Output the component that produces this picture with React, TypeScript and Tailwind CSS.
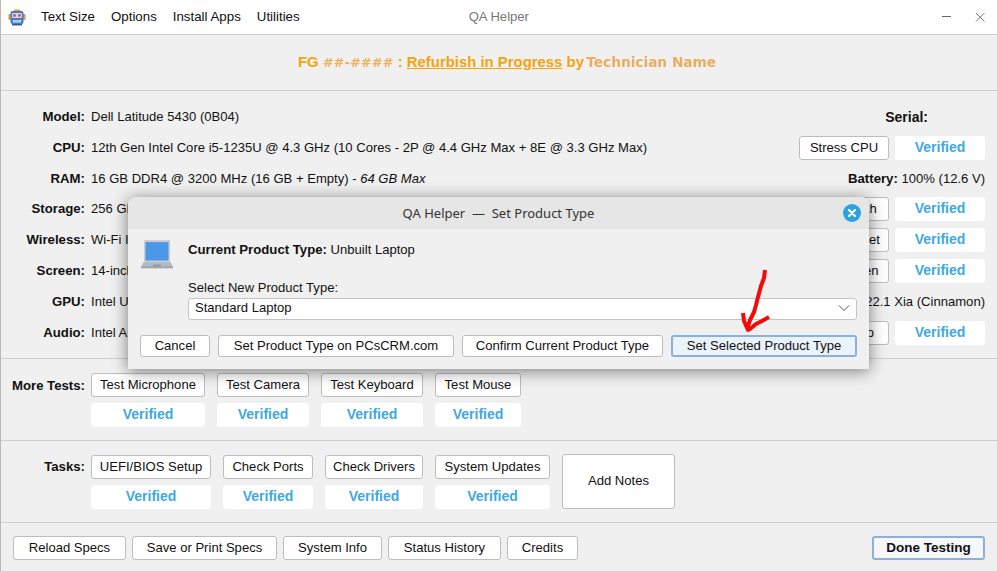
const Btn = ({ children, className = "" }: { children?: React.ReactNode; className?: string }) => (
  <div className={`flex items-center justify-center whitespace-nowrap rounded-[3px] border border-[#bdbdbd] bg-white text-[#111] ${className}`}>
    {children}
  </div>
);
const Verified = ({ className = "" }: { className?: string }) => (
  <div className={`flex h-6 items-center justify-center rounded-[3px] bg-white pb-[2px] text-[14px] font-bold text-[#40a8e4] ${className}`}>Verified</div>
);
const Row = ({ label, children, right, className = "" }: { label: string; children: React.ReactNode; right?: React.ReactNode; className?: string }) => (
  <div className={`flex h-6 items-center justify-between pr-3 ${className}`}>
    <div className="flex items-center overflow-hidden whitespace-nowrap">
      <div className="w-[84px] shrink-0 text-right text-[13.2px] font-bold">{label}</div>
      <div className="ml-[6px]">{children}</div>
    </div>
    <div className="flex shrink-0 items-center gap-[6px]">{right}</div>
  </div>
);
const TestPair = ({ name }: { name: string }) => (
  <>
    <Btn className="h-6 w-[90px] pb-[1px]">{name}</Btn>
    <Verified className="w-[90px]" />
  </>
);
const Column = ({ name, w }: { name: string; w: string }) => (
  <div className={`flex flex-col gap-[6px] ${w}`}>
    <Btn className="h-6 pb-[1px]">{name}</Btn>
    <Verified />
  </div>
);

const Robot = () => (
  <svg width="18" height="18" viewBox="0 0 18 18" className="shrink-0">
    <path d="M5 3.500 C5 0.500 13 0.500 13 3.500 Z" fill="#e8a33d" />
    <rect x="0.500" y="6" width="2.500" height="6" rx="1" fill="#e8913a" />
    <rect x="15" y="6" width="2.500" height="6" rx="1" fill="#e8913a" />
    <rect x="2.500" y="3" width="13" height="13" rx="2" fill="#3f7fc4" />
    <rect x="4" y="5" width="10" height="5" rx="1" fill="#cfd8e6" />
    <circle cx="6.500" cy="7.500" r="1.400" fill="#e8406a" />
    <circle cx="11.500" cy="7.500" r="1.400" fill="#e8406a" />
    <rect x="5" y="12" width="8" height="2.500" fill="#e4e9f2" />
    <path d="M7 12v2.500M9 12v2.500M11 12v2.500" stroke="#3f7fc4" strokeWidth="0.600" />
    <rect x="4" y="16" width="10" height="1.500" fill="#2f5f98" />
  </svg>
);

const Laptop = () => (
  <svg width="34" height="30" viewBox="0 0 34 30" className="shrink-0">
    <rect x="4" y="1" width="26" height="22" rx="1" fill="#c9ced3" />
    <rect x="5.500" y="3" width="23" height="18.500" fill="#4c97e8" />
    <path d="M3.500 23 H30.500 L33 28 H1 Z" fill="#b3bbc2" />
    <rect x="1" y="27.500" width="32" height="1.800" fill="#9aa5ae" />
    <rect x="13" y="25.500" width="8" height="2" fill="#8d98a1" />
  </svg>
);

const Arrow = () => (
  <svg width="40" height="70" viewBox="0 0 40 70" className="absolute left-[734px] top-[265px]">
    <path
      d="M30 5 L29 13 L26 21 L23 32 L21 40 L19 47 L15 55 L12 64 M8 48 L9 56 L13 65 L15 64 L21 59 L27 56 L34 52"
      fill="none"
      stroke="#f40a0a"
      strokeWidth="4"
      strokeLinejoin="round"
    />
  </svg>
);

const Dialog = () => (
  <div className="absolute left-[127px] top-[197px] flex h-[172px] w-[741px] flex-col overflow-hidden rounded-t-[8px] bg-[#f0f0f0] shadow-[0_2px_16px_rgba(0,0,0,0.5)]">
    <div className="relative flex h-[32px] shrink-0 items-center justify-center bg-[#e6e6e6] pt-[1px] font-['Noto_Sans'] text-[13px] text-[#333]">
      <span>QA Helper&nbsp; —&nbsp; Set Product Type</span>
      <div className="absolute right-[8px] top-[7px] flex h-[18px] w-[18px] items-center justify-center rounded-full bg-[#2aa3e0]">
        <svg width="10" height="10" viewBox="0 0 10 10">
          <path d="M2 2 L8 8 M8 2 L2 8" stroke="#fff" strokeWidth="2.200" strokeLinecap="round" />
        </svg>
      </div>
    </div>
    <div className="flex flex-1 flex-col px-3">
      <div className="flex">
        <div className="mt-[10px] w-[48px] shrink-0"><Laptop /></div>
        <div className="flex-1">
          <div className="mt-[13px] h-4 leading-4"><b className="text-[13.2px]">Current Product Type:</b> Unbuilt Laptop</div>
          <div className="mt-[22px] h-4 leading-4">Select New Product Type:</div>
          <div className="mt-[2px] flex h-[22px] items-center justify-between rounded-[3px] border border-[#c4c4c4] bg-white pb-[2px] pl-[6px] pr-[6px]">
            <span>Standard Laptop</span>
            <svg width="12" height="8" viewBox="0 0 12 8"><path d="M1 1.500 L6 6.500 L11 1.500" fill="none" stroke="#555" strokeWidth="1" /></svg>
          </div>
        </div>
      </div>
      <div className="mt-[15px] flex gap-2">
        <Btn className="h-[22px] w-[70px]">Cancel</Btn>
        <Btn className="h-[22px] w-[236px]">Set Product Type on PCsCRM.com</Btn>
        <Btn className="h-[22px] w-[201px]">Confirm Current Product Type</Btn>
        <div className="flex h-[22px] w-[186px] items-center justify-center whitespace-nowrap rounded-[3px] border-2 border-[#8cb0d8] bg-[#eaf2fb] text-[#111]">Set Selected Product Type</div>
      </div>
    </div>
  </div>
);

export default function App() {
  return (
    <div className="relative flex h-[571px] w-[997px] flex-col overflow-hidden border-l border-[#b8b8b8] bg-[#f0f0f0] font-['Liberation_Sans'] text-[13.07px] text-[#111]">
      <div className="relative flex h-[34px] shrink-0 items-center bg-white pl-[7px]">
        <Robot />
        <div className="ml-[15px] flex gap-4 text-[13.3px]">
          <span>Text Size</span>
          <span>Options</span>
          <span>Install Apps</span>
          <span>Utilities</span>
        </div>
        <span className="ml-[169px] text-[#777]">QA Helper</span>
        <div className="absolute right-0 top-0 flex h-[34px] items-center">
          <svg width="12" height="12" viewBox="0 0 12 12" className="mr-[22px]"><path d="M2 5.500 H11" stroke="#666" strokeWidth="1" /></svg>
          <svg width="12" height="12" viewBox="0 0 12 12" className="mr-[11px]"><path d="M2 2 L10.500 10.500 M10.500 2 L2 10.500" stroke="#777" strokeWidth="1" /></svg>
        </div>
      </div>
      <div className="flex h-[57px] shrink-0 items-center justify-center border-y border-[#cfcfcf] pl-[16px] text-[15px] font-bold text-[#f2a50c]">
        <span className="mr-[4px]">FG</span>
        <span className="font-['DejaVu_Sans'] text-[13px] text-[#eeb25a] blur-[0.4px]">##-####</span>
        <span className="whitespace-pre"> : </span>
        <span className="text-[14.9px] underline">Refurbish in Progress</span>
        <span className="whitespace-pre"> by </span>
        <span className="-ml-[2px] font-['DejaVu_Sans'] text-[13.7px] text-[#e9ad62] blur-[0.3px]">Technician Name</span>
      </div>

      <div className="flex h-[268px] shrink-0 flex-col gap-[7px] border-b border-[#cfcfcf] pt-[14px]">
        <Row label="Model:" right={<b className="mr-[57px] text-[14px]">Serial:</b>}>Dell Latitude 5430 (0B04)</Row>
        <Row label="CPU:" right={<TestPair name="Stress CPU" />}>12th Gen Intel Core i5-1235U @ 4.3 GHz (10 Cores - 2P @ 4.4 GHz Max + 8E @ 3.3 GHz Max)</Row>
        <Row label="RAM:" right={<span><b className="text-[13.2px]">Battery:</b> 100% (12.6 V)</span>}>16 GB DDR4 @ 3200 MHz (16 GB + Empty) - <i>64 GB Max</i></Row>
        <Row label="Storage:" className="-mt-px" right={<TestPair name="Test Health" />}>256 GB SSD</Row>
        <Row label="Wireless:" right={<TestPair name="Test Internet" />}>Wi-Fi Intel</Row>
        <Row label="Screen:" right={<TestPair name="Test Screen" />}>14-inch Display</Row>
        <Row label="GPU:" right={<span><b className="text-[13.2px]">OS:</b> Linux Mint 21.1 / 22.1 Xia (Cinnamon)</span>}>Intel UHD</Row>
        <Row label="Audio:" right={<TestPair name="Test Audio" />}>Intel Audio</Row>
      </div>

      <div className="flex h-[82px] shrink-0 border-b border-[#cfcfcf] pt-[14px]">
        <div className="w-[84px] shrink-0 pt-[3px] text-right text-[13.2px] font-bold">More Tests:</div>
        <div className="ml-[6px] flex gap-3">
          <Column name="Test Microphone" w="w-[114px]" />
          <Column name="Test Camera" w="w-[92px]" />
          <Column name="Test Keyboard" w="w-[102px]" />
          <Column name="Test Mouse" w="w-[86px]" />
        </div>
      </div>

      <div className="flex h-[82px] shrink-0 border-b border-[#cfcfcf] pt-[14px]">
        <div className="w-[84px] shrink-0 pt-[2px] text-right text-[13.2px] font-bold">Tasks:</div>
        <div className="ml-[6px] flex gap-3">
          <Column name="UEFI/BIOS Setup" w="w-[120px]" />
          <Column name="Check Ports" w="w-[90px]" />
          <Column name="Check Drivers" w="w-[98px]" />
          <Column name="System Updates" w="w-[115px]" />
          <Btn className="-mt-px h-[55px] w-[113px] pb-[2px]">Add Notes</Btn>
        </div>
      </div>

      <div className="flex flex-1 items-start justify-between pl-3 pr-3 pt-[13px]">
        <div className="flex gap-[6px]">
          <Btn className="h-6 w-[113px] pb-[1px]">Reload Specs</Btn>
          <Btn className="h-6 w-[145px] pb-[1px]">Save or Print Specs</Btn>
          <Btn className="h-6 w-[99px] pb-[1px]">System Info</Btn>
          <Btn className="h-6 w-[113px] pb-[1px]">Status History</Btn>
          <Btn className="h-6 w-[71px] pb-[1px]">Credits</Btn>
        </div>
        <div className="flex h-6 w-[113px] items-center justify-center rounded-[3px] border-2 border-[#8cb0d8] bg-[#f5f7fa] text-[13.5px] font-bold">Done Testing</div>
      </div>

      <Dialog />
      <Arrow />
    </div>
  );
}
